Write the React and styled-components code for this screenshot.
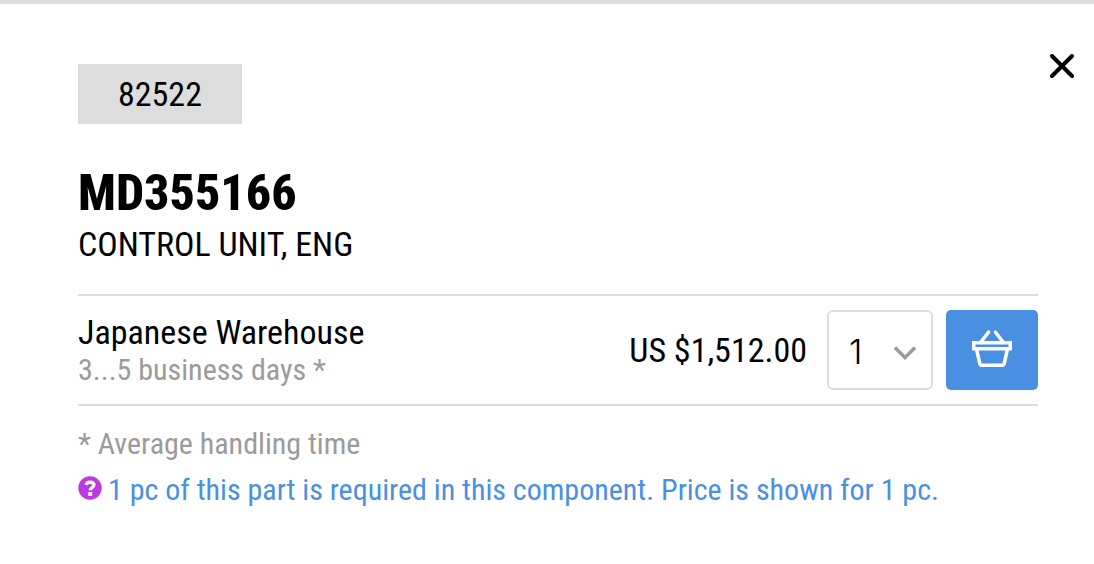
import React, { useState } from 'react';
import styled, { createGlobalStyle } from 'styled-components';

const GlobalStyle = createGlobalStyle`
  *, *::before, *::after { box-sizing: border-box; }
  body {
    margin: 0;
    background: #fff;
    color: #000;
    font-family: 'Roboto Condensed', Roboto, sans-serif;
    font-size: 34px;
    line-height: 40px;
  }
`;

const Panel = styled.main`
  border-top: 4px solid #ddd;
  padding: 60px 56px 56px 78px;
`;

const Header = styled.header`
  display: flex;
  justify-content: space-between;
  align-items: flex-start;
  margin-bottom: 40px;
`;

const Code = styled.div`
  padding: 10px 40px;
  background: #ddd;
`;

const CloseButton = styled.button`
  display: flex;
  margin: -16px -42px 0 0;
  padding: 4px;
  border: 0;
  background: none;
  cursor: pointer;
`;

const PartNumber = styled.h1`
  margin: 0 0 2px;
  font-size: 50px;
  line-height: 58px;
  font-weight: 800;
`;

const PartName = styled.p`
  margin: 0 0 30px;
`;

const Offer = styled.section`
  display: flex;
  align-items: center;
  padding: 14px 0;
  border-top: 2px solid #ddd;
  border-bottom: 2px solid #ddd;
`;

const Warehouse = styled.div`
  flex: 1;
`;

const Muted = styled.p`
  margin: 0;
  color: #9b9b9b;
  font-size: 30px;
  line-height: 36px;
`;

const Price = styled.div`
  margin-right: 20px;
`;

const Quantity = styled.div`
  display: grid;
  align-items: center;
  width: 106px;
  height: 80px;
  margin-right: 13px;

  & > * { grid-area: 1 / 1; }

  svg {
    justify-self: end;
    margin: 6px 17px 0 0;
    pointer-events: none;
  }
`;

const QuantitySelect = styled.select`
  width: 100%;
  height: 100%;
  padding: 2px 0 0 20px;
  appearance: none;
  border: 2px solid #ddd;
  border-radius: 6px;
  background: #fff;
  color: #000;
  font-family: Inter, sans-serif;
  font-size: 34px;
  font-weight: 300;
`;

const CartButton = styled.button`
  display: flex;
  align-items: center;
  justify-content: center;
  width: 92px;
  height: 80px;
  padding: 0 0 2px;
  border: 0;
  border-radius: 5px;
  background: #4a90e2;
  cursor: pointer;
`;

const Notes = styled.footer`
  display: grid;
  gap: 10px;
  padding-top: 20px;
`;

const Hint = styled.p`
  display: flex;
  align-items: flex-start;
  gap: 6px;
  margin: 0;
  color: #4a90e2;
  font-size: 30px;
  line-height: 36px;

  svg {
    flex: none;
    margin-top: 4px;
  }
`;

const CloseIcon = () => (
  <svg width="28" height="28" viewBox="0 0 28 28" fill="none" stroke="#000" strokeWidth="4" strokeLinecap="round" aria-hidden="true">
    <path d="M4 4 24 24M24 4 4 24" />
  </svg>
);

const ChevronIcon = () => (
  <svg width="22" height="16" viewBox="0 0 22 16" fill="none" stroke="#9b9b9b" strokeWidth="3.4" aria-hidden="true">
    <path d="M1 2.5 11 12.5 21 2.5" />
  </svg>
);

const BasketIcon = () => (
  <svg width="40" height="38" viewBox="0 0 40 38" fill="none" stroke="#fff" strokeWidth="3.5" strokeLinejoin="round" aria-hidden="true">
    <path d="M8.5 12.500 16.500 2.200M31.500 12.500 23.500 2.200" strokeLinecap="round" />
    <path d="M1.700 12.700h36.600v6H1.700z" strokeLinejoin="miter" />
    <path d="M4.500 19 7.800 33.500q.5 1.800 2.300 1.800h19.800q1.800 0 2.300-1.800L35.500 19" />
  </svg>
);

const QuestionIcon = () => (
  <svg width="24" height="24" viewBox="0 0 24 24" fill="none" aria-hidden="true">
    <circle cx="12" cy="12" r="11.7" fill="#bd38de" />
    <path d="M8.2 8.8C8.6 7 10 6.2 12 6.2c2.3 0 3.9 1 3.9 2.8 0 2.7-3.7 2.4-3.7 5.2" stroke="#fff" strokeWidth="3.4" />
    <path d="M10.2 16h4v3.8h-4z" fill="#fff" />
  </svg>
);

export default function App() {
  const [quantity, setQuantity] = useState('1');
  return (
    <>
      <GlobalStyle />
      <Panel>
        <Header>
          <Code>82522</Code>
          <CloseButton type="button" aria-label="Close"><CloseIcon /></CloseButton>
        </Header>
        <PartNumber>MD355166</PartNumber>
        <PartName>CONTROL UNIT, ENG</PartName>
        <Offer>
          <Warehouse>
            <div>Japanese Warehouse</div>
            <Muted>3...5 business days *</Muted>
          </Warehouse>
          <Price>US $1,512.00</Price>
          <Quantity>
            <QuantitySelect aria-label="Quantity" value={quantity} onChange={(e) => setQuantity(e.target.value)}>
              {['1', '2', '3', '4', '5'].map((n) => <option key={n}>{n}</option>)}
            </QuantitySelect>
            <ChevronIcon />
          </Quantity>
          <CartButton type="button" aria-label="Add to cart"><BasketIcon /></CartButton>
        </Offer>
        <Notes>
          <Muted>* Average handling time</Muted>
          <Hint>
            <QuestionIcon />
            <span>1 pc of this part is required in this component. Price is shown for 1 pc.</span>
          </Hint>
        </Notes>
      </Panel>
    </>
  );
}
